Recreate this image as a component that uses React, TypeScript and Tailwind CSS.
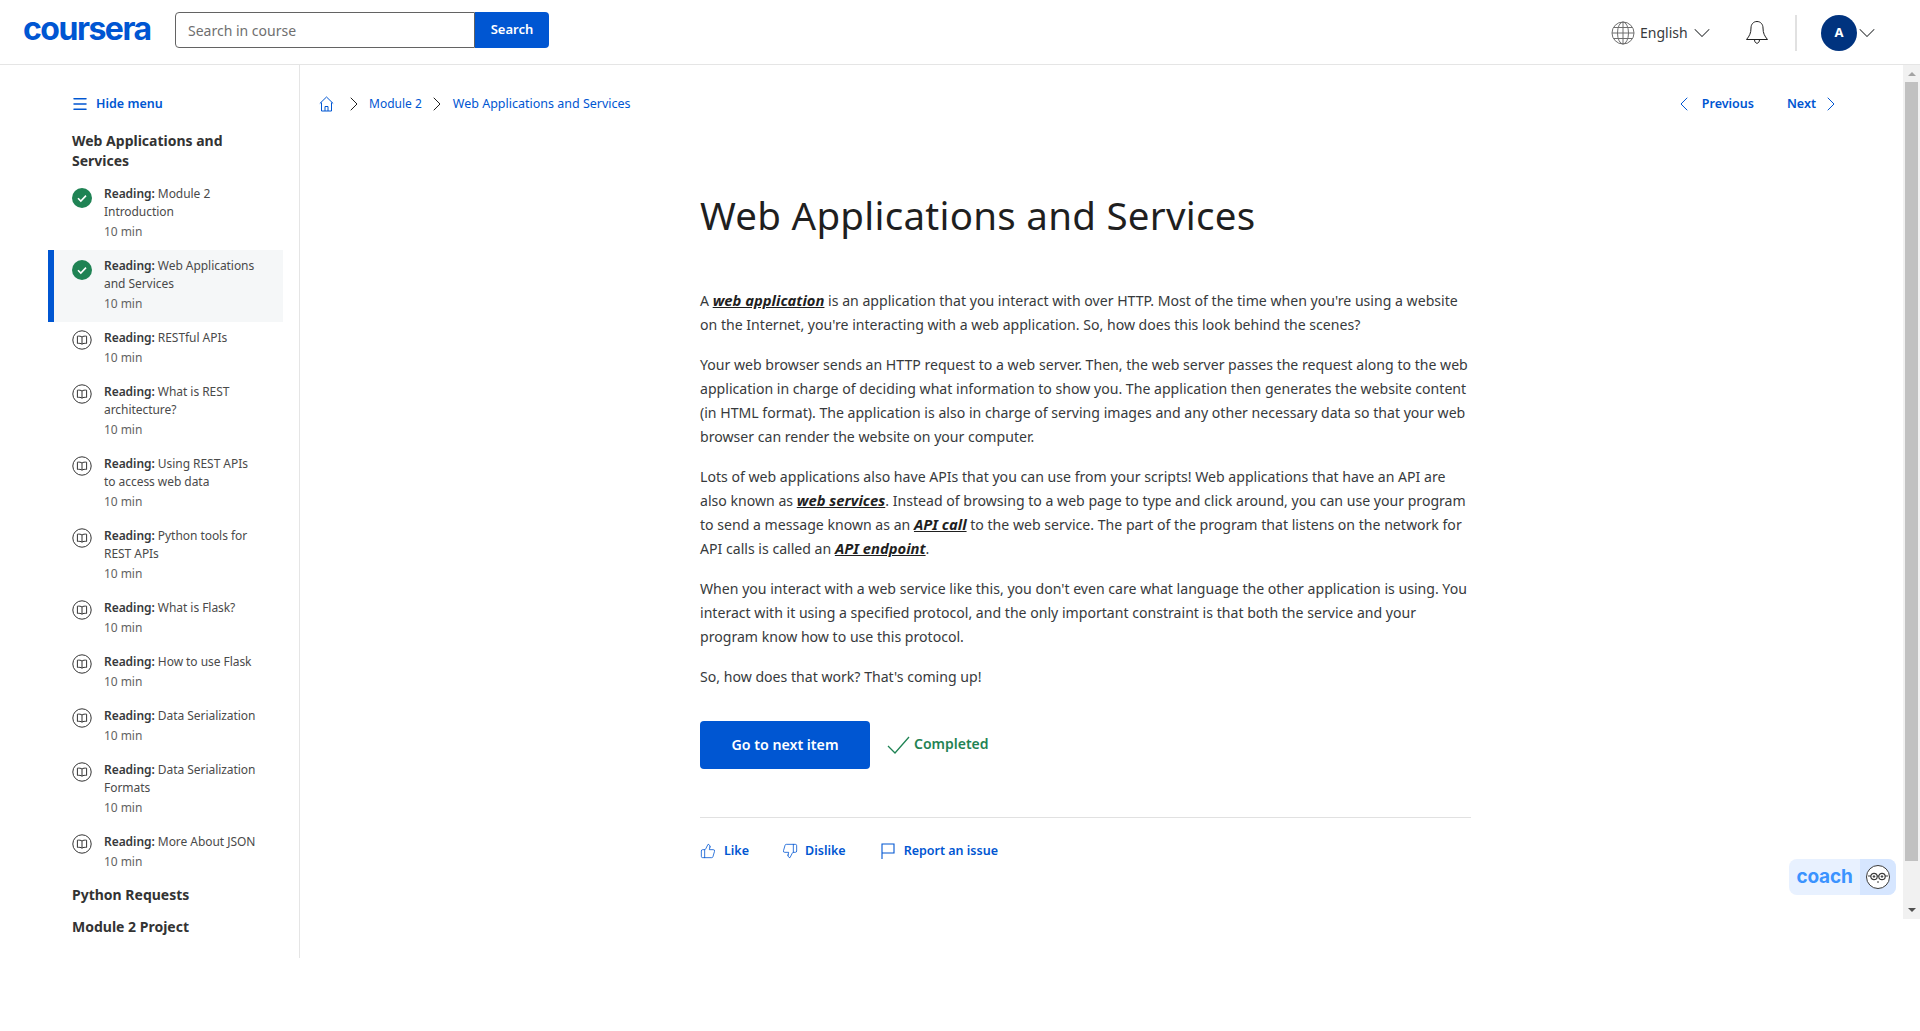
import { ChevronDown, ChevronLeft, ChevronRight, Menu, ThumbsDown, ThumbsUp } from "lucide-react";

const BLUE = "text-[#0056d2]";

const items = [
  { title: "Module 2", rest: "Introduction", done: true },
  { title: "Web Applications", rest: "and Services", done: true, active: true },
  { title: "RESTful APIs" },
  { title: "What is REST", rest: "architecture?" },
  { title: "Using REST APIs", rest: "to access web data" },
  { title: "Python tools for", rest: "REST APIs" },
  { title: "What is Flask?" },
  { title: "How to use Flask" },
  { title: "Data Serialization" },
  { title: "Data Serialization", rest: "Formats" },
  { title: "More About JSON" },
];

function DoneIcon() {
  return (
    <svg width="20" height="20" viewBox="0 0 20 20" className="mt-[1px]">
      <circle cx="10" cy="10" r="10" fill="#1f8354" />
      <path d="M6 10.2l2.8 2.8L14 7.6" fill="none" stroke="#fff" strokeWidth="1.6" />
    </svg>
  );
}

function BookIcon() {
  return (
    <svg width="20" height="20" viewBox="0 0 20 20" fill="none" stroke="#333" strokeWidth="1" className="mt-[-1px]">
      <circle cx="10" cy="10" r="9.2" />
      <path d="M10 7c-1-.9-3-1-4.6-.8v7.2c1.6-.2 3.6-.1 4.6.8 1-.9 3-1 4.6-.8V6.2C13 6 11 6.100 10 7zM10 7v7.200" />
    </svg>
  );
}

function GlobeIcon() {
  return (
    <svg width="24" height="24" viewBox="0 0 24 24" fill="none" stroke="#6f6f6f" strokeWidth="1">
      <circle cx="12" cy="12" r="11" />
      <ellipse cx="12" cy="12" rx="5.500" ry="11" />
      <path d="M12 1v22M1 12h22M2.500 6.500h19M2.500 17.500h19" />
    </svg>
  );
}

function BellIcon() {
  return (
    <svg width="24" height="26" viewBox="0 0 24 26" fill="none" stroke="#1f1f1f" strokeWidth="1">
      <path d="M12 1.500c-3.600 0-6 2.800-6 6.500 0 5-1.500 8-4.500 11.500h21C19.500 16 18 13 18 8c0-3.700-2.400-6.500-6-6.500z" />
      <path d="M9.500 19.500c0 5 5 5 5 0" />
    </svg>
  );
}

function Sidebar() {
  return (
    <aside className="w-[300px] h-[893px] shrink-0 border-r border-[#e5e5e5] pt-[27px] pl-[48px] pr-[16px]">
      <div className={`flex items-center pl-[24px] h-[24px] gap-[6px] ${BLUE}`}>
        <Menu size={18} strokeWidth={2} className="-ml-[1px] mr-[1px]" />
        <span className="text-[12.500px] font-semibold">Hide menu</span>
      </div>
      <h2 className="pl-[24px] mt-[15px] mb-[7px] text-[14px] leading-[20px] font-bold text-[#333]">
        Web Applications and
        <br />
        Services
      </h2>
      <ul>
        {items.map((it) => (
          <li
            key={it.title + (it.rest ?? "")}
            className={`flex pt-[7px] pb-[9px] gap-[12px] pl-[24px] ${it.active ? "bg-[#f5f7f8] border-l-[6px] border-[#0056d2] !pl-[18px]" : ""}`}
          >
            <span className="mt-[2px]">{it.done ? <DoneIcon /> : <BookIcon />}</span>
            <div className="text-[12px] leading-[18px] tracking-[-0.05px] text-[#4a4a4a]">
              <div>
                <span className="font-semibold text-[#373a3c]">Reading:</span> {it.title}
              </div>
              {it.rest && <div>{it.rest}</div>}
              <div className="mt-[2px] text-[#636363]">10 min</div>
            </div>
          </li>
        ))}
      </ul>
      <h3 className="pl-[24px] mt-[5px] text-[14px] leading-[20px] font-bold text-[#333]">Python Requests</h3>
      <h3 className="pl-[24px] mt-[12px] text-[14px] leading-[20px] font-bold text-[#333]">Module 2 Project</h3>
    </aside>
  );
}

function Scrollbar() {
  return (
    <div className="w-[17px] shrink-0 bg-[#f1f1f1] flex flex-col items-center">
      <div className="h-[17px] flex items-center justify-center">
        <div className="w-0 h-0 border-l-[4px] border-r-[4px] border-b-[4px] border-l-transparent border-r-transparent border-b-[#a3a3a3]" />
      </div>
      <div className="w-[13px] h-[779px] bg-[#c1c1c1]" />
      <div className="flex-1 flex items-end justify-center pb-[7px]">
        <div className="w-0 h-0 border-l-[4px] border-r-[4px] border-t-[4px] border-l-transparent border-r-transparent border-t-[#505050]" />
      </div>
    </div>
  );
}

function Term({ children }: { children: string }) {
  return <a className="font-bold italic underline text-[14.800px] leading-none text-[#1f1f1f]">{children}</a>;
}

function Content() {
  return (
    <main className="flex-1 relative">
      <div className="flex items-center justify-between h-[24px] mt-[27px] ml-[19px] mr-[60px] text-[12.500px]">
        <div className={`flex items-center ${BLUE}`}>
          <svg width="15" height="16" viewBox="0 0 15 16" fill="none" stroke="#0056d2" strokeWidth="1">
            <path d="M.8 7.500L7.500 1l6.700 6.500M2.500 6.500V15h10V6.500M6 15v-4.500h3V15" />
          </svg>
          <ChevronRight size={24} strokeWidth={1} className="ml-[8px] mr-[3px] text-[#1f1f1f]" />
          <span className="text-[12px]">Module 2</span>
          <ChevronRight size={24} strokeWidth={1} className="ml-[3px] mr-[4px] text-[#1f1f1f]" />
          <span>Web Applications and Services</span>
        </div>
        <div className={`flex items-center font-semibold ${BLUE}`}>
          <ChevronLeft size={24} strokeWidth={1} />
          <span className="ml-[6px]">Previous</span>
          <span className="ml-[33px]">Next</span>
          <ChevronRight size={24} strokeWidth={1} className="ml-[3px]" />
        </div>
      </div>
      <article className="ml-[400px] w-[771px]">
        <h1 className="mt-[72px] h-[54px] text-[38.500px] leading-[54px] text-[#1f1f1f] tracking-[0.27px]">
          Web Applications and Services
        </h1>
        <div className="mt-[47px] text-[14.100px] leading-[24px] text-[#373a3c] flex flex-col gap-[16px] whitespace-nowrap">
          <p>
            A <Term>web application</Term> is an application that you interact with over HTTP. Most of the time when you're using a website
            <br />
            on the Internet, you're interacting with a web application. So, how does this look behind the scenes?
          </p>
          <p>
            Your web browser sends an HTTP request to a web server. Then, the web server passes the request along to the web
            <br />
            application in charge of deciding what information to show you. The application then generates the website content
            <br />
            (in HTML format). The application is also in charge of serving images and any other necessary data so that your web
            <br />
            browser can render the website on your computer.
          </p>
          <p>
            Lots of web applications also have APIs that you can use from your scripts! Web applications that have an API are
            <br />
            also known as <Term>web services</Term>. Instead of browsing to a web page to type and click around, you can use your program
            <br />
            to send a message known as an <Term>API call</Term> to the web service. The part of the program that listens on the network for
            <br />
            API calls is called an <Term>API endpoint</Term>.
          </p>
          <p>
            When you interact with a web service like this, you don't even care what language the other application is using. You
            <br />
            interact with it using a specified protocol, and the only important constraint is that both the service and your
            <br />
            program know how to use this protocol.
          </p>
          <p>So, how does that work? That's coming up!</p>
        </div>
        <div className="flex items-center mt-[32px]">
          <button className="w-[170px] h-[48px] rounded-[4px] bg-[#0056d2] text-white text-[14.200px] font-semibold">
            Go to next item
          </button>
          <svg width="26" height="22" viewBox="0 0 26 22" fill="none" stroke="#1f8354" strokeWidth="1.300" className="ml-[15px] mt-[1px]">
            <path d="M3 11l7 7L24 2" />
          </svg>
          <span className="ml-[3px] -mt-[3px] text-[14px] font-semibold text-[#1f8354]">Completed</span>
        </div>
        <div className="mt-[48px] border-t border-[#e1e1e1] pt-[12px] flex items-center text-[12.500px] font-semibold text-[#0056d2] h-[56px]">
          <ThumbsUp size={16} strokeWidth={1.200} className="-mt-[2px]" />
          <span className="ml-[8px]">Like</span>
          <ThumbsDown size={16} strokeWidth={1.200} className="ml-[33px] -mt-[1px]" />
          <span className="ml-[7px]">Dislike</span>
          <svg width="14" height="16" viewBox="0 0 14 16" fill="none" stroke="#0056d2" strokeWidth="1.100" className="ml-[35px] -mt-[2px]">
            <path d="M1 16V1h12v9H1" />
          </svg>
          <span className="ml-[9px]">Report an issue</span>
        </div>
      </article>
      <div className="absolute left-[1489px] top-[794px] w-[107px] h-[36px] flex rounded-[8px] overflow-hidden bg-[#e8f1ff]">
        <span className="flex-1 flex items-center justify-center text-[19px] font-bold text-[#3b93ff] font-['Inter',sans-serif] tracking-[-0.2px]">
          coach
        </span>
        <span className="w-[36px] bg-[#d6e6ff] flex items-center justify-center">
          <svg width="24" height="24" viewBox="0 0 24 24" fill="#fff" stroke="#3a3a3a" strokeWidth="1">
            <circle cx="12" cy="12" r="11.500" />
            <circle cx="8" cy="11.500" r="3.200" strokeWidth="1.200" />
            <circle cx="16" cy="11.500" r="3.200" strokeWidth="1.200" />
            <circle cx="8" cy="11.500" r=".8" fill="#3a3a3a" />
            <circle cx="16" cy="11.500" r=".8" fill="#3a3a3a" />
            <path d="M2 11h3M19 11h3M11 11h2M11 17h2" fill="none" />
          </svg>
        </span>
      </div>
    </main>
  );
}

export default function App() {
  return (
    <div className="w-[1920px] h-[1031px] overflow-hidden bg-white font-['Noto_Sans',sans-serif]">
      <header className="h-[65px] border-b border-[#e5e5e5] flex items-center pl-[23px] pr-[39px]">
        <span className="w-[128px] text-[32px] leading-none font-bold text-[#0056d2] font-['Inter',sans-serif] tracking-[-1.500px] -mt-[6px]">
          coursera
        </span>
        <div className="ml-[24px] flex h-[36px] -mt-[4px]">
          <div className="w-[300px] border border-[#636363] rounded-l-[4px] flex items-center px-[12px] text-[14px] text-[#6f6f6f]">
            Search in course
          </div>
          <button className="w-[74px] bg-[#0056d2] rounded-r-[4px] text-white text-[13px] font-semibold">Search</button>
        </div>
        <div className="ml-auto flex items-center text-[#373a3c] mt-[1px]">
          <GlobeIcon />
          <span className="ml-[5px] w-[48px] text-[14px]">English</span>
          <ChevronDown size={28} strokeWidth={0.900} />
          <span className="ml-[29px]">
            <BellIcon />
          </span>
          <div className="ml-[26px] w-[2px] h-[36px] bg-[#e1e1e1]" />
          <div className="ml-[24px] w-[36px] h-[36px] rounded-full bg-[#00337f] text-white text-[13px] font-bold flex items-center justify-center">
            A
          </div>
          <ChevronDown size={28} strokeWidth={0.900} className="-ml-[4px]" />
        </div>
      </header>
      <div className="flex items-start">
        <Sidebar />
        <div className="flex-1 h-[854px] flex">
          <Content />
          <Scrollbar />
        </div>
      </div>
    </div>
  );
}
